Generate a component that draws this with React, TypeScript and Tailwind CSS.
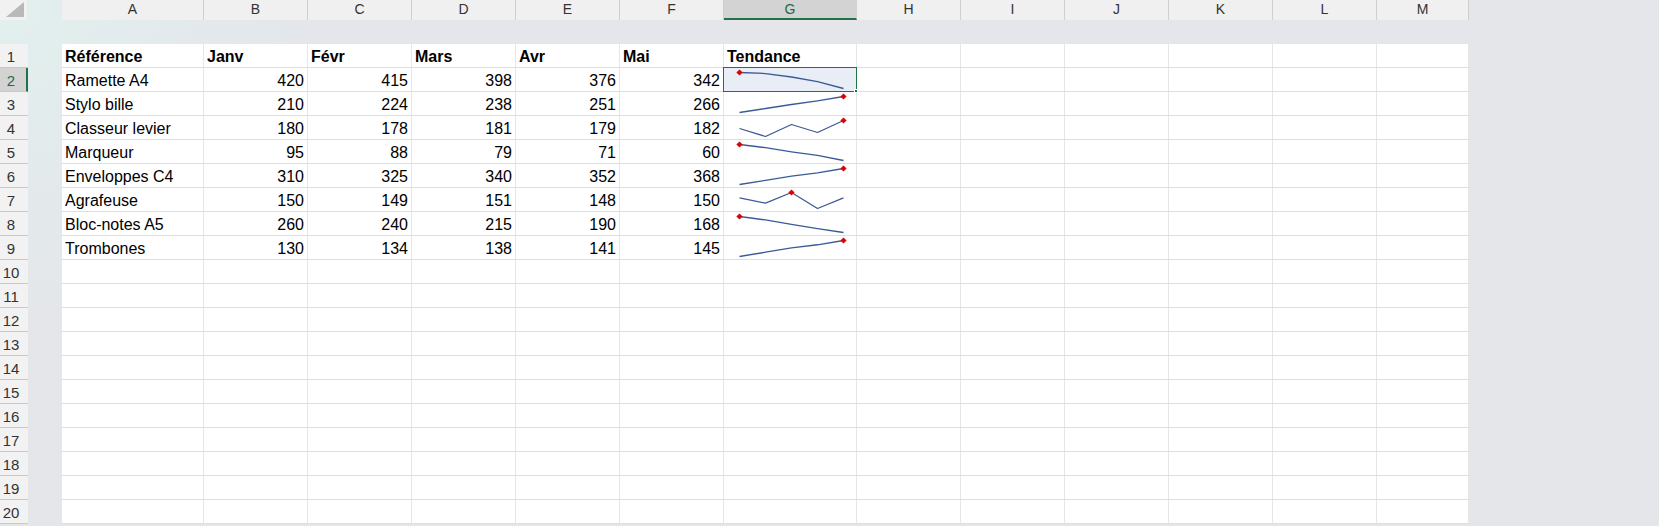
import React from "react";

const cols = [
  { l: "A", w: 142 },
  { l: "B", w: 104 },
  { l: "C", w: 104 },
  { l: "D", w: 104 },
  { l: "E", w: 104 },
  { l: "F", w: 104 },
  { l: "G", w: 133 },
  { l: "H", w: 104 },
  { l: "I", w: 104 },
  { l: "J", w: 104 },
  { l: "K", w: 104 },
  { l: "L", w: 104 },
  { l: "M", w: 92 },
];

const data: [string, number[]][] = [
  ["Ramette A4", [420, 415, 398, 376, 342]],
  ["Stylo bille", [210, 224, 238, 251, 266]],
  ["Classeur levier", [180, 178, 181, 179, 182]],
  ["Marqueur", [95, 88, 79, 71, 60]],
  ["Enveloppes C4", [310, 325, 340, 352, 368]],
  ["Agrafeuse", [150, 149, 151, 148, 150]],
  ["Bloc-notes A5", [260, 240, 215, 190, 168]],
  ["Trombones", [130, 134, 138, 141, 145]],
];

const headers = ["Référence", "Janv", "Févr", "Mars", "Avr", "Mai", "Tendance"];

const Sparkline = ({ values }: { values: number[] }) => {
  const max = Math.max(...values);
  const min = Math.min(...values);
  const pts = values.map((v, i) => ({
    x: 15.5 + i * 26,
    y: 4.5 + ((max - v) / (max - min)) * 16,
  }));
  const hi = pts[values.indexOf(max)];
  return (
    <svg width="132" height="23" className="block">
      <polyline
        points={pts.map((p) => `${p.x},${p.y}`).join(" ")}
        fill="none"
        stroke="#3b5b98"
        strokeWidth="1.3"
        strokeLinejoin="round"
      />
      <rect
        x={hi.x - 2.2}
        y={hi.y - 2.2}
        width="4.4"
        height="4.4"
        fill="#e00000"
        transform={`rotate(45 ${hi.x} ${hi.y})`}
      />
    </svg>
  );
};

const Selection = () => (
  <div className="absolute -top-px -left-px -right-px -bottom-px border border-[#217346] pointer-events-none">
    <div className="absolute -right-[2px] -bottom-[2px] w-[4px] h-[4px] bg-[#217346] border border-white" />
  </div>
);

const Cell = ({
  w,
  children,
  right,
  bold,
}: {
  w: number;
  children?: React.ReactNode;
  right?: boolean;
  bold?: boolean;
}) => (
  <div
    style={{ width: w }}
    className={`relative h-full shrink-0 border-r border-[#e6e6e6] px-[3px] leading-[26px] text-[16px] text-black whitespace-nowrap overflow-hidden ${
      right ? "text-right" : ""
    } ${bold ? "font-bold" : ""}`}
  >
    {children}
  </div>
);

export default function App() {
  const rows = Array.from({ length: 20 }, (_, i) => i + 1);

  return (
    <div className="w-[1659px] h-[526px] overflow-hidden bg-[#e4e6ea] bg-[radial-gradient(circle_at_0%_0%,#e1f0ee_0%,#e3ebec_140px,#e4e6ea_330px)] font-['Liberation_Sans',Arial,sans-serif]">
      {/* column headers */}
      <div className="flex h-[20px]">
        <div className="relative w-[27px] h-full bg-[#f1f1f1]">
          <div className="absolute right-[3px] bottom-[3px] w-0 h-0 border-l-[18px] border-l-transparent border-b-[15px] border-b-[#b9b9b9]" />
        </div>
        <div className="w-[35px]" />
        <div className="flex bg-[#f0f0f0]">
          {cols.map((c) => (
            <div
              key={c.l}
              style={{ width: c.w }}
              className={`shrink-0 h-full text-center text-[14px] leading-[19px] border-r ${
                c.l === "G"
                  ? "bg-[#d3d3d3] text-[#1e6b41] border-b-2 border-b-[#217346] border-r-[#d3d3d3]"
                  : "text-[#333] border-r-[#cfcfcf]"
              }`}
            >
              {c.l}
            </div>
          ))}
        </div>
      </div>

      {/* spacer band */}
      <div className="h-[24px]" />

      <div className="flex">
        {/* row numbers */}
        <div className="w-[28px] flex flex-col">
          {rows.map((r) => (
            <div
              key={r}
              className={`h-[24px] border-b border-[#c9c9c9] text-[15px] leading-[25px] overflow-hidden ${
                r === 2
                  ? "bg-[#d3d3d3] text-[#1e6b41] border-r-2 border-r-[#217346]"
                  : "bg-[#f2f2f2] text-[#333]"
              }`}
            >
              <div className="w-[22px] text-center">{r}</div>
            </div>
          ))}
        </div>
        <div className="w-[34px]" />

        {/* grid */}
        <div className="flex flex-col bg-white">
          {rows.map((r) => {
            const d = r >= 2 && r <= 9 ? data[r - 2] : null;
            return (
              <div key={r} className="flex h-[24px] border-b border-[#dedede]">
                {cols.map((c, ci) => {
                  if (r === 1 && ci < 7)
                    return (
                      <Cell key={c.l} w={c.w} bold>
                        {headers[ci]}
                      </Cell>
                    );
                  if (d && ci === 0)
                    return (
                      <Cell key={c.l} w={c.w}>
                        {d[0]}
                      </Cell>
                    );
                  if (d && ci >= 1 && ci <= 5)
                    return (
                      <Cell key={c.l} w={c.w} right>
                        {d[1][ci - 1]}
                      </Cell>
                    );
                  if (d && ci === 6)
                    return (
                      <div
                        key={c.l}
                        style={{ width: c.w }}
                        className={`relative shrink-0 h-full border-r border-[#e6e6e6] ${
                          r === 2 ? "bg-[#e9edf6]" : ""
                        }`}
                      >
                        <Sparkline values={d[1]} />
                        {r === 2 && <Selection />}
                      </div>
                    );
                  return <Cell key={c.l} w={c.w} />;
                })}
              </div>
            );
          })}
        </div>
      </div>
    </div>
  );
}
